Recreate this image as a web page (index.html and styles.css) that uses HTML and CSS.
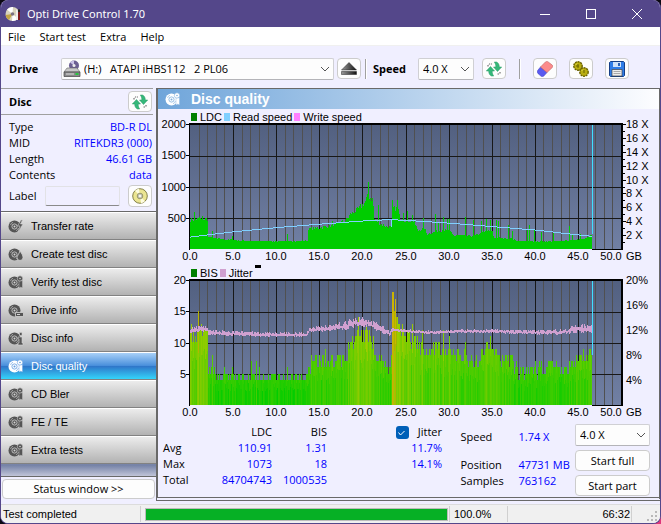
FILE: index.html
```
<!DOCTYPE html>
<html lang="en">
<head>
  <meta charset="UTF-8">
  <meta name="viewport" content="width=device-width, initial-scale=1.0">
  <title>Opti Drive Control 1.70</title>
  <link rel="stylesheet" href="styles.css">
</head>
<body>
  <!-- Shared icons -->
  <svg class="sprite" aria-hidden="true">
    <symbol id="disc" viewBox="0 0 16 16">
      <circle cx="6.5" cy="8.5" r="6" fill="currentColor"/>
      <circle cx="6.5" cy="8.5" r="2.600" fill="none" stroke="var(--hole)" stroke-width=".8"/>
      <circle cx="6.5" cy="8.5" r="1" fill="var(--hole)"/>
      <path d="M2.500 7a4.500 4.500 0 0 1 2.500-2.800M10.500 10a4.500 4.500 0 0 1-2.500 2.800" fill="none" stroke="var(--hole)" stroke-width=".6"/>
    </symbol>
    <symbol id="chevron" viewBox="0 0 10 6">
      <path d="M1 1l4 4 4-4" fill="none" stroke="#555" stroke-width="1"/>
    </symbol>
    <symbol id="refresh" viewBox="0 0 16 16">
      <path d="M4.500 5.500L.3 10h2.400c0 2.500.8 4 2.800 5h2.200c-1-1.500-1.500-2.700-1.500-5h2.300z" fill="#35b87a" stroke="#2a9a66" stroke-width=".5"/>
      <path d="M11.500 10.500L15.700 6h-2.400c0-2.500-.8-4-2.800-5H8.300c1 1.500 1.500 2.700 1.500 5H7.500z" fill="#35b87a" stroke="#2a9a66" stroke-width=".5"/>
      <path d="M2 5.500V4l1.500-1H6M14 11v1.500L12.500 13H11" fill="none" stroke="#555" stroke-width="1" stroke-dasharray="1.500 1"/>
    </symbol>
    <symbol id="lens" viewBox="0 0 16 16">
      <circle cx="12" cy="4.500" r="2.700" fill="currentColor" stroke="var(--hole)" stroke-width=".6"/>
      <path d="M11 7.500l3.500-1v7.500l-1.700-.8-1.800.8z" fill="currentColor" stroke="var(--hole)" stroke-width=".4"/>
      <circle cx="12" cy="4.500" r=".8" fill="var(--hole)"/>
    </symbol>
  </svg>

  <div class="window">
    <header class="titlebar">
      <svg class="app-icon" viewBox="0 0 16 16" aria-hidden="true">
        <circle cx="7.500" cy="8" r="7" fill="#d8d3bd"/>
        <path d="M7.500 8L2 3.500A7 7 0 0 1 8 1zM7.500 8l5.500 4.500A7 7 0 0 1 7 15z" fill="#fff"/>
        <path d="M7.500 8L.5 9A7 7 0 0 0 4 14z" fill="#c3a445"/>
        <circle cx="7.500" cy="8" r="1.800" fill="#7a7282"/>
        <path d="M11 3l2 2v9h-2z" fill="#eee"/>
        <path d="M13 6l2-1v9h-2z" fill="#7e1820"/>
        <path d="M13 3.500h2V6h-2z" fill="#222"/>
      </svg>
      <h1>Opti Drive Control 1.70</h1>
      <div class="window-buttons">
        <button aria-label="Minimize"><svg viewBox="0 0 12 12"><path d="M1 6.500h10"/></svg></button>
        <button aria-label="Maximize"><svg viewBox="0 0 12 12"><rect x="1.500" y="1.500" width="9" height="9"/></svg></button>
        <button aria-label="Close"><svg viewBox="0 0 12 12"><path d="M1 1l10 10M11 1L1 11"/></svg></button>
      </div>
    </header>

    <nav class="menu">
      <a href="#file">File</a>
      <a href="#start">Start test</a>
      <a href="#extra">Extra</a>
      <a href="#help">Help</a>
    </nav>

    <div class="toolbar">
      <label class="drive-label" for="drive">Drive</label>
      <div class="select drive-select">
        <svg class="drive-icon" viewBox="0 0 18 18" aria-hidden="true">
          <circle cx="11" cy="5.500" r="5" fill="#6c5f93"/>
          <path d="M11 5.500L7 2.500A5 5 0 0 1 11 .5z" fill="#c9c1e6"/>
          <circle cx="11" cy="5.500" r="1.500" fill="#eee"/>
          <path d="M4 8h10l3 4H1z" fill="#c8c8c8" stroke="#666" stroke-width=".6"/>
          <path d="M1 12h16v4.500H1z" fill="#8b8b8b" stroke="#444" stroke-width=".7"/>
          <path d="M3 14h8" stroke="#ddd"/>
          <path d="M12.500 13h3v2h-3z" fill="#28c840"/>
        </svg>
        <select id="drive"><option>(H:) &nbsp; ATAPI iHBS112 &nbsp; 2 PL06</option></select>
        <svg class="chevron"><use href="#chevron"/></svg>
      </div>
      <button class="icon-button" aria-label="Eject">
        <svg viewBox="0 0 16 16">
          <defs><linearGradient id="eject" x1="0" x2="1"><stop offset="0" stop-color="#999"/><stop offset="1" stop-color="#111"/></linearGradient></defs>
          <path d="M8 1.500L15.500 9H.5z" fill="url(#eject)" stroke="#222" stroke-width=".5"/>
          <path d="M.5 10.500h15v3H.5z" fill="url(#eject)" stroke="#222" stroke-width=".5"/>
        </svg>
      </button>
      <span class="separator"></span>
      <label class="speed-label" for="speed">Speed</label>
      <div class="select speed-select">
        <select id="speed"><option>4.0 X</option></select>
        <svg class="chevron"><use href="#chevron"/></svg>
      </div>
      <button class="icon-button refresh-speed" aria-label="Refresh speeds"><svg><use href="#refresh"/></svg></button>
      <span class="separator"></span>
      <div class="tools">
        <button class="icon-button" aria-label="Erase disc">
          <svg viewBox="0 0 16 16">
            <path d="M3.500 6l6.500 5.500-3.200 3.500c-.8.700-2 .7-3 0L.8 12.300c-.8-.8-.8-2 0-3z" fill="#5a5af0" stroke="#4646c8" stroke-width=".6"/>
            <path d="M3.500 6L8.500.9c.8-.7 1.800-.7 2.600 0L15.200 4c.8.800.8 1.800 0 2.600L10 11.500z" fill="#fb8b8b" stroke="#c06060" stroke-width=".6"/>
          </svg>
        </button>
        <button class="icon-button" aria-label="Settings">
          <svg viewBox="0 0 16 16">
            <circle cx="5" cy="5" r="4.200" fill="#b8ad10" stroke="#6a6200" stroke-width="1.400" stroke-dasharray="2 .7"/>
            <circle cx="11" cy="11" r="4.200" fill="#b8ad10" stroke="#6a6200" stroke-width="1.400" stroke-dasharray="2 .7"/>
            <path d="M5 3v4M3 5h3M11 9v3" stroke="#6b6400" stroke-width="1"/>
            <path d="M2.500 4l1.500-1.500M8.500 10l1.500-1.500" stroke="#e6de50"/>
          </svg>
        </button>
        <button class="icon-button" aria-label="Save">
          <svg viewBox="0 0 16 16">
            <path d="M.5 1.500l1-1h13l1 1v13l-1 1h-13l-1-1z" fill="#2f7de8" stroke="#153f86"/>
            <path d="M4 1h8v5H4z" fill="#cfe3fa"/>
            <path d="M9 2h2v3H9z" fill="#2860b8"/>
            <path d="M3 8.500h10V15H3z" fill="#eee" stroke="#444" stroke-width=".7"/>
            <path d="M4.500 10.500h7M4.500 12.500h7" stroke="#aaa"/>
          </svg>
        </button>
      </div>
    </div>

    <main>
      <aside>
        <div class="disc-head">
          <h2>Disc</h2>
          <button class="icon-button" aria-label="Refresh disc"><svg><use href="#refresh"/></svg></button>
        </div>
        <dl class="disc-data">
          <div><dt>Type</dt><dd>BD-R DL</dd></div>
          <div><dt>MID</dt><dd>RITEKDR3 (000)</dd></div>
          <div><dt>Length</dt><dd>46.61 GB</dd></div>
          <div><dt>Contents</dt><dd>data</dd></div>
        </dl>
        <div class="disc-label">
          <label for="label">Label</label>
          <input id="label" type="text">
          <button class="icon-button" aria-label="Read label">
            <svg viewBox="0 0 16 16">
              <circle cx="8" cy="8" r="7.300" fill="#ebe592" stroke="#77743c" stroke-width=".9"/>
              <path d="M8 8L3 2.800A7 7 0 0 1 7 .8zM8 8l5 5.200a7 7 0 0 1-4 2z" fill="#fdfce0"/>
              <circle cx="8" cy="8" r="2.800" fill="#c9c9b8" stroke="#88865c" stroke-width=".8"/>
              <circle cx="8" cy="8" r="1.100" fill="#fff"/>
            </svg>
          </button>
        </div>
        <nav class="tests">
          <a href="#transfer"><svg><use href="#disc"/><path d="M13 2L9.500 8H12l-2 6 5-8h-2.500l2-4z" fill="currentColor" stroke="var(--hole)" stroke-width=".6"/></svg>Transfer rate</a>
          <a href="#create"><svg><use href="#disc"/><path d="M12 5c2 3 3 4.500 3 6.500a3 3 0 0 1-6 0C9 10 11 8 12 5z" fill="currentColor" stroke="var(--hole)" stroke-width=".8"/></svg>Create test disc</a>
          <a href="#verify"><svg><use href="#disc"/><use href="#lens"/></svg>Verify test disc</a>
          <a href="#drive-info"><svg><use href="#disc"/><path d="M7.500 10.500h8v4h-8z" fill="currentColor" stroke="var(--hole)" stroke-width=".8"/><path d="M9 12.500h3" stroke="var(--hole)"/></svg>Drive info</a>
          <a href="#disc-info"><svg><use href="#disc"/><path d="M10 7h4v6h1v2h-5v-2h1V9h-1zM11.500 2.500h2.500v3h-2.500z" fill="currentColor" stroke="var(--hole)" stroke-width=".6"/></svg>Disc info</a>
          <a href="#quality" class="active"><svg><use href="#disc"/><use href="#lens"/></svg>Disc quality</a>
          <a href="#bler"><svg><use href="#disc"/><use href="#lens"/></svg>CD Bler</a>
          <a href="#fete"><svg><use href="#disc"/><use href="#lens"/></svg>FE / TE</a>
          <a href="#extra-tests"><svg><use href="#disc"/><use href="#lens"/></svg>Extra tests</a>
        </nav>
        <button class="text-button status-button">Status window &gt;&gt;</button>
      </aside>

      <section class="panel">
        <h2><svg><use href="#disc"/><use href="#lens"/></svg>Disc quality</h2>

        <div class="legend">
          <span class="ldc">LDC</span><span class="read">Read speed</span><span class="write">Write speed</span>
        </div>
        <svg class="chart" id="ldcChart" viewBox="0 0 501 141" role="img" aria-label="LDC and read speed"></svg>

        <div class="legend">
          <span class="ldc">BIS</span><span class="jitter">Jitter</span><i></i>
        </div>
        <svg class="chart" id="bisChart" viewBox="0 0 501 141" role="img" aria-label="BIS and jitter"></svg>

        <div class="results">
          <table>
            <thead>
              <tr>
                <td></td>
                <th scope="col">LDC</th>
                <th scope="col">BIS</th>
                <th scope="col"><label><input type="checkbox" checked><svg viewBox="0 0 13 13"><path d="M3.500 6.500l2 2.500 4-4"/></svg>Jitter</label></th>
              </tr>
            </thead>
            <tbody>
              <tr><th scope="row">Avg</th><td>110.91</td><td>1.31</td><td>11.7%</td></tr>
              <tr><th scope="row">Max</th><td>1073</td><td>18</td><td>14.1%</td></tr>
              <tr><th scope="row">Total</th><td>84704743</td><td>1000535</td><td></td></tr>
            </tbody>
          </table>
          <dl class="progress-data">
            <dt class="current">Speed</dt><dd class="current">1.74 X</dd>
            <dt>Position</dt><dd>47731 MB</dd>
            <dt>Samples</dt><dd>763162</dd>
          </dl>
          <div class="start">
            <div class="select">
              <select aria-label="Test speed"><option>4.0 X</option></select>
              <svg class="chevron"><use href="#chevron"/></svg>
            </div>
            <button class="text-button">Start full</button>
            <button class="text-button">Start part</button>
          </div>
        </div>
      </section>
    </main>

    <footer>
      <span class="message">Test completed</span>
      <div class="bar"><div class="fill"></div></div>
      <span class="percent">100.0%</span>
      <span class="time">66:32</span>
      <svg class="grip" viewBox="0 0 12 12" aria-hidden="true">
        <path d="M9 1h2v2H9zM9 5h2v2H9zM9 9h2v2H9zM5 5h2v2H5zM5 9h2v2H5zM1 9h2v2H1z"/>
      </svg>
    </footer>
  </div>

  <script src="charts.js"></script>
</body>
</html>
```
FILE: styles.css
```
* {
  box-sizing: border-box;
}

body {
  margin: 0;
  background: linear-gradient(135deg, #0a0812 70%, #e0387c);
  font: 11px/16px "Open Sans", "Noto Sans", sans-serif;
  color: #000;
}

h1,
h2,
dl,
dd {
  margin: 0;
}

a {
  color: inherit;
  text-decoration: none;
}

button,
select,
input {
  font: inherit;
  color: inherit;
}

.sprite {
  display: none;
}

.window {
  display: flex;
  flex-direction: column;
  min-height: 100vh;
  border: 1px solid #54478a;
  border-top: 0;
  border-radius: 8px;
  overflow: hidden;
  background: #f0efff;
}

/* Title bar and menu */
.titlebar {
  display: flex;
  align-items: center;
  height: 27px;
  padding-left: 4px;
  background: #54478a;
  color: #fff;
}

.app-icon {
  width: 16px;
  height: 16px;
}

.titlebar h1 {
  flex: 1;
  margin-left: 6px;
  font: 11px/16px "Noto Sans", sans-serif;
}

.window-buttons {
  display: flex;
}

.window-buttons button {
  width: 46px;
  height: 27px;
  padding: 0;
  border: 0;
  background: none;
}

.window-buttons svg {
  display: block;
  width: 12px;
  height: 12px;
  margin: 0 auto;
  fill: none;
  stroke: #fff;
}

.menu {
  display: flex;
  gap: 14px;
  height: 19px;
  padding: 2px 7px;
  background: #fff;
  border-bottom: 1px solid #f0f0f0;
}

/* Toolbar */
.toolbar {
  display: flex;
  align-items: center;
  height: 42px;
  padding: 3px 31px 0 8px;
}

.toolbar label {
  font-weight: bold;
}

.drive-label {
  width: 52px;
}

.speed-label {
  width: 45px;
}

.select {
  position: relative;
  height: 22px;
}

.select select {
  width: 100%;
  height: 100%;
  padding: 0 8px 0 4px;
  appearance: none;
  background: #fdfdfd;
  border: 1px solid #d0d0d4;
  border-bottom-color: #b4b4b8;
  border-radius: 2px;
}

.select .chevron {
  position: absolute;
  right: 4px;
  top: 8px;
  width: 10px;
  height: 6px;
  pointer-events: none;
}

.drive-select {
  flex: 1;
  margin-right: 3px;
}

.drive-select select {
  padding-left: 22px;
}

.drive-icon {
  position: absolute;
  left: 2px;
  top: 2px;
  width: 18px;
  height: 18px;
}

.speed-select {
  width: 56px;
  margin-right: 8px;
}

.icon-button {
  display: flex;
  align-items: center;
  justify-content: center;
  width: 24px;
  height: 21px;
  padding: 0;
  background: #fdfdfd;
  border: 1px solid #ccc;
  border-radius: 4px;
}

.icon-button svg {
  width: 16px;
  height: 16px;
}

.separator {
  width: 2px;
  height: 20px;
  margin: 0 6px 0 4px;
  border-left: 1px solid #a0a0a0;
  border-right: 1px solid #fff;
}

.refresh-speed {
  margin-right: 9px;
}

.tools {
  display: flex;
  gap: 12px;
  margin-left: 6px;
}

/* Left column */
main {
  display: flex;
  flex: 1;
  padding-bottom: 3px;
}

aside {
  display: flex;
  flex-direction: column;
  width: 155px;
}

.disc-head {
  display: flex;
  align-items: center;
  justify-content: space-between;
  height: 27px;
  margin-right: 3px;
  padding: 0 1px 0 8px;
  border: solid #a0a0a0;
  border-width: 1px 0;
}

.disc-head h2 {
  font-size: 11px;
}

.disc-data {
  padding: 4px 4px 0 8px;
}

.disc-data div {
  display: flex;
  justify-content: space-between;
}

dd,
tbody td {
  color: #00f;
}

.disc-label {
  display: flex;
  align-items: center;
  gap: 8px;
  height: 28px;
  padding: 0 4px 2px 8px;
}

.disc-label input {
  flex: 1;
  min-width: 0;
  height: 20px;
  background: none;
  border: 1px solid #e2e2e6;
  border-bottom-color: #8a8a8a;
  border-radius: 2px;
}

.disc-label .icon-button {
  height: 22px;
}

.tests {
  flex: 1;
  border: solid #696969;
  border-width: 1px 0;
  background: linear-gradient(#c8cbe0, #7784a8 96%, #c0c4d8);
}

.tests a {
  --hole: #d4d4d4;
  display: flex;
  align-items: center;
  gap: 7px;
  height: 28px;
  padding-left: 7px;
  border-top: 1px solid #fff;
  border-bottom: 1px solid #828282;
  background: linear-gradient(#ececec, #b2b2b2);
  font-family: "Liberation Sans", Arial, sans-serif;
}

.tests svg {
  width: 16px;
  height: 16px;
  color: #555;
}

.tests .active {
  --hole: #5f9be0;
  background: linear-gradient(#a8d0f8, #4a90dc 48%, #2f74c8 50%, #34d4fa);
  color: #fff;
}

.tests .active svg {
  color: #fff;
}

.text-button {
  height: 21px;
  padding: 0;
  background: #fdfdfd;
  border: 1px solid #ccc;
  border-radius: 4px;
}

.status-button {
  height: 20px;
  margin: 2px 1px;
}

/* Result panel */
.panel {
  flex: 1;
  min-width: 0;
  border: 1px solid #696969;
  border-left-width: 2px;
  border-bottom: 4px double #696969;
}

.panel h2 {
  --hole: #7eaedd;
  display: flex;
  align-items: center;
  gap: 10px;
  height: 20px;
  padding-left: 7px;
  background: linear-gradient(90deg, #6fa5da, #fdfdff);
  color: #fff;
  font: bold 14px/20px "Liberation Sans", Arial, sans-serif;
}

.panel h2 svg {
  width: 16px;
  height: 16px;
}

.legend {
  display: flex;
  align-items: center;
  gap: 2px;
  height: 15px;
  padding-left: 33px;
  font-family: "Liberation Sans", Arial, sans-serif;
}

.legend span::before {
  content: "";
  display: inline-block;
  width: 6px;
  height: 8px;
  margin-right: 3px;
}

.legend .ldc::before {
  background: #008000;
}

.legend .read::before {
  background: #80d0ff;
}

.legend .write::before {
  background: #ff80ff;
}

.legend .jitter::before {
  background: #d0a0d0;
}

.legend i {
  align-self: flex-start;
  width: 6px;
  height: 3px;
  background: #000;
}

.chart {
  display: block;
  width: 100%;
  overflow: visible;
  font-family: "Liberation Sans", Arial, sans-serif;
  font-size: 11px;
  shape-rendering: crispEdges;
}

.results {
  display: flex;
  justify-content: space-between;
  padding: 3px 9px 0 5px;
}

table {
  border-collapse: collapse;
  height: 64px;
}

th,
td {
  width: 55px;
  height: 16px;
  padding: 0;
  font-weight: normal;
  line-height: 16px;
  text-align: right;
}

th:nth-child(2) {
  width: 72px;
}

th:last-child {
  width: 115px;
}

th[scope="row"],
thead td {
  width: 37px;
  text-align: left;
}

table label {
  display: flex;
  align-items: center;
  justify-content: flex-end;
  position: relative;
}

table input {
  appearance: none;
  width: 13px;
  height: 13px;
  margin: 0 9px 0 0;
  border-radius: 3px;
  background: #005fb8;
}

table label svg {
  position: absolute;
  right: 34px;
  width: 13px;
  height: 13px;
  fill: none;
  stroke: #fff;
  pointer-events: none;
}

.progress-data {
  display: grid;
  grid-template-columns: 58px 38px;
  grid-template-rows: 28px 16px 16px;
  white-space: nowrap;
  padding-top: 5px;
}

.start {
  display: flex;
  flex-direction: column;
  gap: 4px;
  width: 75px;
}

/* Status bar */
footer {
  display: flex;
  align-items: center;
  height: 19px;
  padding: 0 2px;
  background: #f0f0f0;
  border-top: 1px solid #dcdcdc;
  font-family: "Liberation Sans", Arial, sans-serif;
}

.message {
  width: 138px;
  border-right: 1px solid #d0d0d0;
}

.bar {
  flex: 1;
  height: 13px;
  margin: 0 1px 0 4px;
  border: 1px solid #bcbcbc;
  background: #e6e6e6;
}

.fill {
  height: 100%;
  background: #06b025;
}

.percent {
  width: 59px;
  padding-left: 4px;
  border: solid #d0d0d0;
  border-width: 0 1px;
}

.time {
  width: 124px;
  padding-right: 1px;
  border-right: 1px solid #d0d0d0;
  text-align: right;
}

.grip {
  width: 12px;
  height: 12px;
  margin: 4px 0 0 14px;
  fill: #b8b8b8;
}
```
FILE: charts.js
```
// Plot area inside the svg
const left = 32;
const width = 431;
const height = 125;
const maxGb = 50;
const discGb = 46.6;
const right = left + width + 1;

// Curves as [GB, value]
const ldc = [
  [0, 470], [2, 480], [2.05, 190], [3, 165], [4.5, 150], [6, 135], [8, 125], [13.6, 130],
  [13.65, 320], [15, 340], [16.2, 370], [17, 410], [18, 450], [18.6, 560], [19.5, 640],
  [20.3, 760], [20.6, 850], [21.2, 780], [21.3, 480], [22, 400], [23.3, 340], [23.4, 660],
  [24.1, 640], [24.3, 480], [25, 460], [26, 430], [26.4, 290], [27.2, 340], [27.4, 240],
  [29, 300], [30, 300], [30.5, 220], [32, 210], [33, 210], [34, 270], [35, 300], [35.2, 180],
  [37, 170], [38, 130], [42, 120], [44, 140], [46, 170], [46.6, 240]
];
const ldcPeaks = {
  0.5: 590, 1: 510, 1.4: 520, 2.6: 290, 4.9: 210, 11.2: 240, 16.5: 450, 20.6: 1073, 21.8: 700,
  23.4: 780, 24: 780, 24.7: 580, 25.2: 610, 25.7: 550, 27: 490, 28.4: 560, 28.8: 420, 29.4: 510,
  29.8: 480, 30.1: 480, 31.9: 510, 32.8: 460, 33.8: 440, 34.3: 480, 34.8: 470, 35.5: 460, 35.7: 440,
  36.9: 380, 37.3: 280, 39.1: 300, 39.3: 380, 39.9: 320, 40.7: 270, 42.1: 260, 44: 370, 44.3: 220, 45.2: 240
};
const bis = [
  [0, 12], [2, 12], [2.05, 6], [2.7, 6], [3, 5], [8, 4.600], [13.6, 5], [13.65, 7.200], [16, 7],
  [18, 8], [18.5, 9.500], [19.5, 12], [20.5, 11], [21.2, 10.500], [21.5, 8.500], [22.5, 7],
  [23.3, 6.500], [23.4, 17], [23.8, 16], [24.2, 12.500], [25, 11], [26, 11], [26.4, 9.500], [28, 9],
  [30, 9.500], [31, 8], [33, 7.500], [34, 8.500], [35, 9.500], [36, 8], [37, 7], [38, 6], [41, 6.200],
  [43.500, 6], [45, 7.500], [46.2, 8.500], [46.6, 9]
];
const bisPeaks = {
  0.1: 13, 0.9: 15, 1.3: 13, 2.6: 8, 3.9: 6, 4.9: 6, 7.1: 7, 7.7: 7, 8: 6, 11.2: 6, 15.7: 9,
  19.5: 14, 20.4: 13, 20.8: 12, 22.1: 8, 23.5: 18, 23.8: 17, 24.6: 13, 25.2: 12, 25.7: 13, 26.9: 12,
  28.4: 10, 29.3: 12, 30.1: 11, 31.9: 10, 34.3: 10, 34.8: 11, 35.5: 9, 37.3: 8, 40.7: 7, 42: 7, 44.8: 8, 46.3: 9
};
const speed = [[0, 1.800], [5, 2.550], [10, 3.150], [15, 3.650], [20, 4.100], [23, 4.300], [25, 4.200], [30, 3.800], [35, 3.300], [40, 2.800], [45, 2.100], [46.6, 1.900]];
// Jitter as [GB, percent, spread]
const jitter = [
  [0, 12], [1, 12.200], [2, 12.200], [2.1, 11.600], [5, 11.500], [8, 11.300], [13.5, 11.300], [13.8, 12],
  [16, 12.300], [18, 12.700], [19, 13.100], [20.7, 13.300], [21.3, 12.600], [22.5, 11.900], [23.2, 11.400],
  [23.4, 12.100], [26, 11.800], [28, 11.700], [30, 11.800], [35, 11.900], [38, 11.700], [43, 11.700], [45, 12.200], [46.6, 12.200]
];
const jitterSpread = [[0, 0.35], [13.6, 0.25], [16, 0.4], [18, 0.6], [21.5, 0.6], [23.3, 0.3], [23.6, 0.15], [36, 0.2], [42, 0.3], [44, 0.45], [46.6, 0.5]];

// Repeatable noise between -1 and 1
let seed = 7;
function noise() {
  seed = (seed * 16807) % 2147483647;
  return seed / 1073741823.5 - 1;
}

function valueAt(curve, gb) {
  for (let i = 1; i < curve.length; i++) {
    if (gb <= curve[i][0]) {
      const [x0, y0] = curve[i - 1];
      const [x1, y1] = curve[i];
      return y0 + (y1 - y0) * (gb - x0) / (x1 - x0);
    }
  }
  return curve[curve.length - 1][1];
}

function peakAt(peaks, x) {
  for (const gb in peaks) {
    if (Math.round(gb * width / maxGb) === x) return peaks[gb];
  }
  return 0;
}

const rect = (x, y, w, h, fill) => `<rect x="${x}" y="${y}" width="${w}" height="${h}" fill="${fill}"/>`;
const text = (x, y, anchor, label) => `<text x="${x}" y="${y}" text-anchor="${anchor}">${label}</text>`;
const lastX = Math.round(discGb * width / maxGb);

function grid(id) {
  let out = `<defs><linearGradient id="${id}" x2="0" y2="1"><stop stop-color="#526080"/><stop offset="1" stop-color="#7180a4"/></linearGradient></defs>`;
  out += rect(left, 0, width, height, `url(#${id})`);
  for (let gb = 1; gb < maxGb; gb++) {
    const x = left + Math.round(gb * width / maxGb);
    out += rect(x, 0, 1, height, gb % 5 ? "#505050" : "#181818");
  }
  for (const y of [32, 63, 94]) out += rect(left, y, width, 1, "#181818");
  return out;
}

function frame(ticks) {
  let out = rect(left - 1, -1, width + 3, 2, "#000") + rect(left - 1, 0, 1, height + 1, "#000");
  out += rect(right - 1, 0, 2, height + 1, "#000") + rect(left + lastX, height, width - lastX, 1, "#000");
  ticks.forEach((label, i) => {
    const y = Math.round(i * 31.3);
    out += rect(left - 4, y, 4, 1, "#000") + text(28, y + 4, "end", label);
  });
  for (let gb = 0; gb <= maxGb; gb += 5) {
    const x = left + Math.round(gb * width / maxGb);
    out += text(gb === maxGb ? x - 10 : x, height + 11, "middle", gb.toFixed(1));
  }
  return out + text(468, height + 11, "start", "GB");
}

function drawSpeed() {
  let out = "";
  for (let x = 0; x < lastX; x++) {
    const y = Math.round(height - valueAt(speed, x * maxGb / width) * height / 18);
    out += rect(left + x, y, 1, 1, "#80d0ff");
  }
  return out;
}

function drawJitter() {
  let out = "";
  for (let x = 0; x < lastX; x++) {
    const gb = x * maxGb / width;
    const value = valueAt(jitter, gb);
    const spread = valueAt(jitterSpread, gb);
    const top = Math.round(height - (value + Math.abs(noise()) * spread * 1.5) * height / 20);
    const bottom = Math.round(height - (value - Math.abs(noise()) * spread) * height / 20);
    out += rect(left + x, top, 1, Math.max(bottom - top, 1) + 1, "#d0a0d0");
  }
  return out;
}

function drawLdc() {
  let out = grid("ldcBack");
  for (let x = 0; x < lastX; x++) {
    const base = valueAt(ldc, x * maxGb / width);
    const value = Math.max(base * (1 + noise() * 0.07), peakAt(ldcPeaks, x));
    const h = Math.round(value * height / 2000);
    out += rect(left + x, height - h, 1, h, "#00cc00");
  }
  out += drawSpeed();
  out += rect(left + 201, 96, 1, 7, "#80d0ff");
  out += rect(left + lastX, 0, 1, 110, "#40e0ff");
  out += frame(["2000", "1500", "1000", "500"]);
  for (let i = 1; i <= 18; i++) {
    const y = Math.round(height - i * height / 18);
    out += rect(right, y, i % 2 ? 3 : 4, 1, "#000");
    if (i % 2 === 0) out += text(right + 4, y + 4, "start", i + " X");
  }
  document.getElementById("ldcChart").innerHTML = out;
}

// Low counts are green, high counts turn yellow
function bisColor(value) {
  const red = Math.min(204, Math.round(value * 12 - 10));
  const green = value > 14 ? 180 : 204;
  return `rgb(${red}, ${green}, 0)`;
}

function drawBis() {
  let out = grid("bisBack");
  for (let x = 0; x < lastX; x++) {
    const gb = x * maxGb / width;
    const spread = gb > 2 && gb < 13.6 ? 0.6 : 1.3;
    const value = Math.round(Math.max(valueAt(bis, gb) - 0.4 + noise() * spread, peakAt(bisPeaks, x)));
    const h = Math.round(value * height / 20);
    const low = Math.round(h * (0.65 + noise() * 0.1));
    out += rect(left + x, height - h, 1, h, bisColor(value + noise()));
    out += rect(left + x, height - low, 1, low, bisColor(value - 1.5 + noise() * 1.5));
  }
  out += drawJitter();
  out += rect(left + lastX, 0, 1, 75, "#40e0ff");
  out += frame(["20", "15", "10", "5"]);
  for (let i = 0; i < 5; i++) {
    out += text(right + 4, i * 25 + 4, "start", 20 - i * 4 + "%");
  }
  document.getElementById("bisChart").innerHTML = out;
}

drawLdc();
drawBis();
```
